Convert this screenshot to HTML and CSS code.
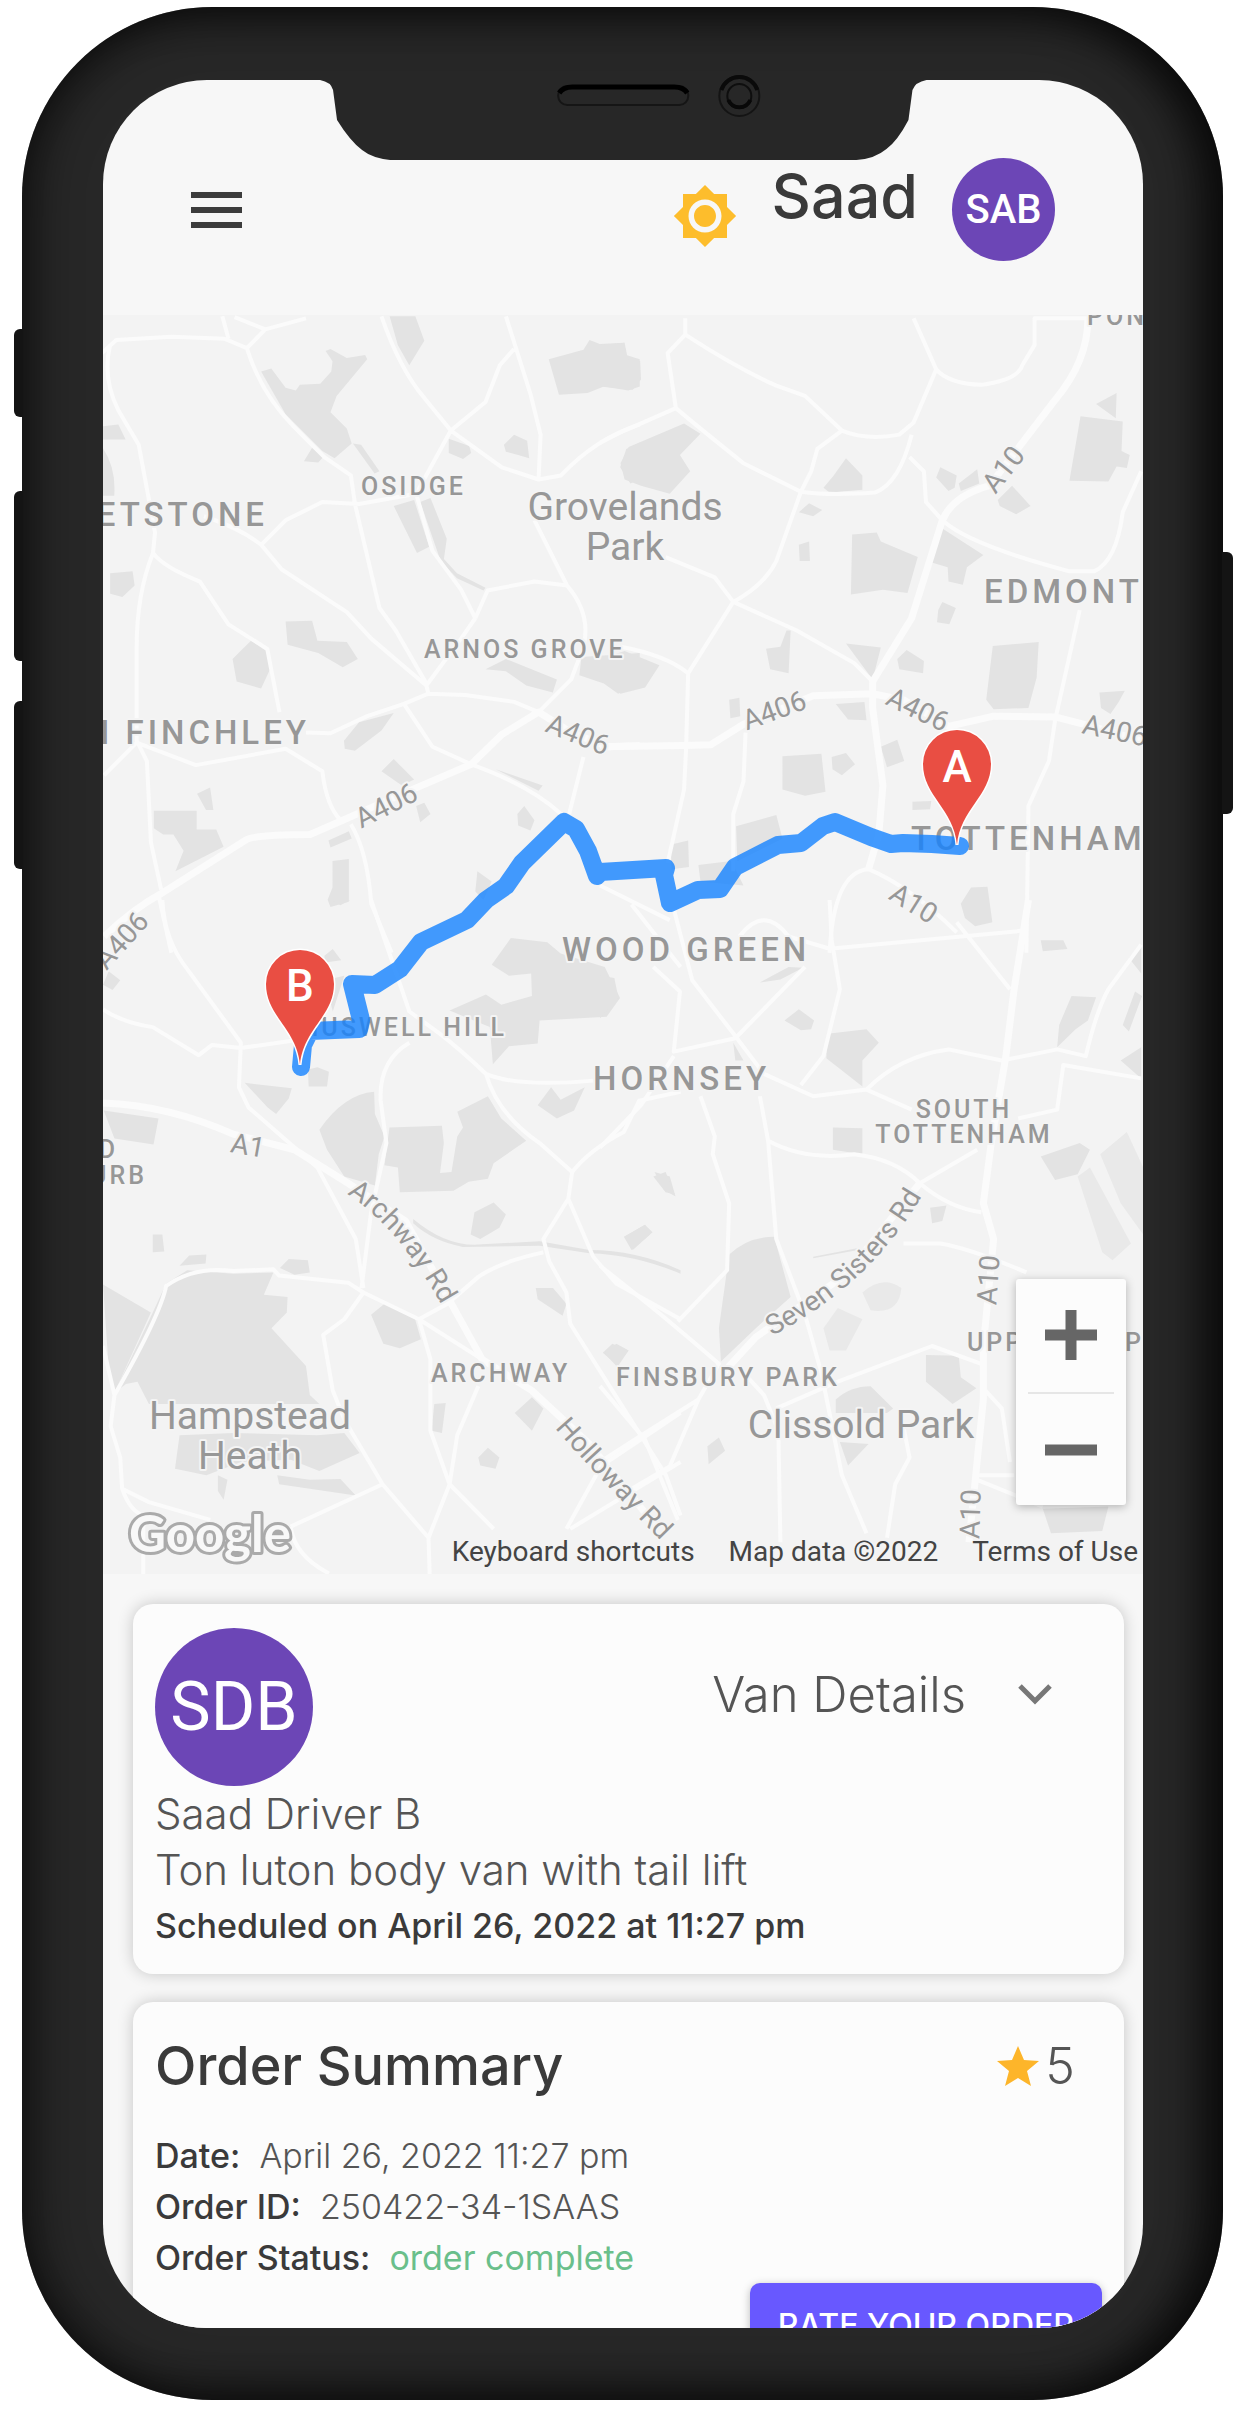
FILE: index.html
```html
<!DOCTYPE html>
<html lang="en">
<head>
<meta charset="utf-8">
<meta name="viewport" content="width=device-width, initial-scale=1">
<title>Order tracking</title>
<link rel="stylesheet" href="styles.css">
</head>
<body>
<div class="phone">
  <span class="key key-mute"></span>
  <span class="key key-up"></span>
  <span class="key key-down"></span>
  <span class="key key-power"></span>
  <svg class="notch" viewBox="0 0 600 84" aria-hidden="true">
    <path d="M-2 0H604V1Q593 3 590 11L586 41Q575 62 564 70 552 80 534 81H68Q50 79 40 71 28 62 15 41L11 11Q9 3 -2 1Z" fill="#272727"/>
    <rect x="236" y="7" width="130" height="19" rx="9" fill="#272727" stroke="#151515" stroke-width="2"/>
    <path d="M237 14Q241 8 250 8H352Q361 8 365 14" fill="none" stroke="#000" stroke-width="5"/>
    <circle cx="417" cy="17" r="20" fill="#272727" stroke="#141414" stroke-width="2"/>
    <path d="M399 11A19 19 0 0 1 435 11" fill="none" stroke="#0a0a0a" stroke-width="4"/>
    <circle cx="417" cy="17" r="12" fill="#272727" stroke="#0e0e0e" stroke-width="2"/>
    <path d="M406 21A12 12 0 0 0 428 21" fill="none" stroke="#080808" stroke-width="4"/>
  </svg>
  <div class="screen">
    <header class="topbar">
      <button class="icon-button" aria-label="Menu">
        <svg width="52" height="40" viewBox="0 0 52 40"><path d="M0 5H51M0 20H51M0 35H51" stroke="#3c3c3c" stroke-width="6"/></svg>
      </button>
      <button class="icon-button theme" aria-label="Toggle theme">
        <svg width="66" height="66" viewBox="0 0 24 24" fill="#fdbd2c"><path d="M20 8.69V4h-4.69L12 .69 8.69 4H4v4.69L.69 12 4 15.31V20h4.69L12 23.31 15.31 20H20v-4.69L23.31 12 20 8.69zM12 18c-3.31 0-6-2.69-6-6s2.69-6 6-6 6 2.69 6 6-2.69 6-6 6zm0-10c-2.21 0-4 1.79-4 4s1.79 4 4 4 4-1.79 4-4-1.79-4-4-4z"/></svg>
      </button>
      <span class="user">Saad</span>
      <span class="avatar">SAB</span>
    </header>

    <section class="map" aria-label="Delivery route">
      <svg class="map-canvas" viewBox="103 315 1040 1259">
        <g class="tile" transform="translate(0 300) scale(.408)">
          <path class="park" d="M955 40H1018L1040 100 1003 160 975 110ZM640 175 665 168 700 215 725 222 735 208 785 205 812 175 815 150 798 125 810 120 850 142 895 135 900 145 825 235 810 275 850 315 862 352 820 388 790 370 700 280ZM745 395 765 362 792 385 780 398ZM865 352 885 355 930 420 918 425ZM1345 145 1430 122 1445 98 1470 108 1530 105 1535 135 1568 145V212L1540 222 1480 212 1440 228 1370 232ZM1100 340 1150 358 1155 375 1135 390 1100 375ZM1235 355 1260 330 1292 345 1297 388 1270 380 1240 372ZM1568 350 1535 365 1520 410 1545 450 1568 440ZM965 505 1015 490 1052 605 1022 620ZM1030 495 1055 485 1095 585 1088 635 1120 670 1190 705 1185 712 1120 682 1080 640ZM250 310 290 305 308 342H250ZM250 360Q285 410 280 480H250ZM270 670 325 665 330 700 300 728 270 720ZM700 788 765 786 778 835 850 838 877 880 840 900 780 865 705 845ZM570 880 615 835 660 865 662 905 640 952 580 935ZM1190 905 1240 880 1365 930 1355 962 1290 945 1240 910ZM1425 875 1568 865V935L1515 965 1480 940 1420 920ZM843 1080 880 1035 965 1012 935 1055 870 1105 845 1100ZM935 1155 965 1125 1015 1175 985 1190ZM483 1210 515 1195 523 1250 505 1250ZM377 1252H482V1298H530L548 1340 430 1400 450 1350 425 1310H400L377 1295ZM805 1325 855 1302 862 1320 810 1342ZM815 1375 855 1370 855 1475 810 1488 803 1470 815 1440ZM1020 1240 1040 1232 1055 1260 1030 1280ZM1268 1260 1285 1240 1310 1275 1300 1300 1270 1288ZM1215 1150 1330 1190 1320 1203ZM1170 1400 1205 1425 1185 1470 1165 1450Z"/>
          <path class="road" d="M250 130 285 98 420 90 550 95 605 118 650 72 750 45M575 42 650 72M545 40 560 95M605 118Q640 230 720 310L795 385 860 430 870 500 930 755 970 810 1045 940M270 110Q250 190 290 270L340 355 380 570 375 620Q335 720 335 850L335 1080 360 1130 370 1330 395 1445M375 620Q400 655 490 690L560 795 655 855 685 1010M640 600 690 660 850 765 910 830 1045 945M500 530Q590 560 640 600L700 540 790 495 880 500 1020 475 1105 320 1190 250 1225 160 1260 120M935 40Q980 170 1040 240L1105 320 1230 410 1320 440 1325 330 1300 230 1240 40M1320 440 1375 430Q1460 340 1568 305M1020 475 1060 615 1130 710 1165 780M1165 780 1195 712 1310 690 1390 700M1310 540 1390 700Q1450 770 1430 850L1400 930 1320 1010M1165 780 1130 830 1045 945 1050 965M750 1060 810 1062 900 1020 990 990 1050 965 1140 968 1260 985 1320 1010M255 1165 335 1085 480 1140 700 1100 790 1155Q800 1240 835 1275M990 990 1060 1095 1155 1138Q1300 1190 1375 1260M1430 1120 1395 1260"/>
          <path class="road" d="M860 1285Q900 1350 910 1480L960 1600M390 1465 420 1600" />
          <path class="road wide" d="M255 1560Q330 1490 395 1455L600 1325Q620 1310 760 1310L840 1275 1010 1200 1155 1138 1230 1065 1320 1010 1400 1060 1490 1095 1568 1092"/>
        </g>
        <g class="tile" transform="translate(600 300) scale(.41 .408)">
          <path class="park" d="M0 110 60 105 68 145 98 150 100 195 80 220 0 212ZM50 400 70 360 205 303 245 328 195 380 220 420 170 475 100 455 60 440ZM545 460 570 430 600 388 640 430V465L560 472ZM485 520 510 498 542 515 520 530ZM485 600 510 592 512 640 487 640ZM615 575 675 570 685 592 775 630 750 718 690 710 612 722ZM835 560 935 625 895 655 885 698 850 690 848 655 805 642ZM825 760 835 740 868 755 852 795 822 790ZM820 435 830 410 870 430 865 460 850 468ZM875 450 920 415 925 450 880 468ZM970 490 1005 455 1050 505 1015 525 975 505ZM1172 285 1275 298 1272 370 1292 380 1285 412 1260 408 1240 445 1145 443ZM1210 255 1260 228 1258 290ZM958 848 1070 838 1065 925 1045 1000 960 1003 942 980ZM600 842 685 852 665 930ZM725 880 748 858 790 885 788 915 730 905ZM405 855 440 850 455 810 465 810 460 915 415 905ZM0 880 60 860 145 895 110 950 50 965 0 930ZM315 980 340 975 342 1020 318 1025ZM575 990 645 985 650 1030 605 1028ZM1218 962 1280 958 1265 985 1245 1015 1222 1000ZM685 1095 725 1078 742 1130 700 1145ZM445 1118 540 1112 550 1205 500 1215 445 1200ZM565 1120 600 1110 622 1138 590 1165 567 1150ZM762 1230 808 1228 805 1248 762 1250ZM332 1290 430 1262 445 1320 335 1375ZM172 1335 215 1325 217 1390 175 1395ZM240 1385 320 1375 350 1435 245 1425ZM880 1480 905 1440 945 1438 957 1525 915 1535 890 1515Z"/>
          <path class="road" d="M208 45V85L165 130 185 265 60 320 0 350M208 85Q330 165 430 210L500 235 590 320Q650 345 730 330L765 300 820 170 765 45M820 170Q850 205 930 208 1020 195 1030 160L1060 110V45H1190M185 265Q250 320 350 400L490 470Q560 480 670 472 730 450 760 330M590 320 530 365 515 420 490 470 430 640Q400 700 325 740L280 680 160 630M325 740 215 915 210 1100 205 1200 165 1380M50 850Q160 870 215 915M325 740 480 810 620 890 665 935M755 385 790 420 795 495 835 540Q900 600 1145 665H1205Q1260 640 1275 520L1320 420M1170 760 1110 1030 1095 1130 1045 1240 1040 1600M355 1060 350 1180 325 1260 325 1400M655 1395Q570 1400 560 1600M655 1395Q760 1440 870 1550M0 1435 170 1520M340 1560Q400 1480 460 1560L560 1590 1040 1545"/>
          <path class="road wide" d="M1190 45Q1190 150 1110 245L950 455Q860 480 835 540L760 780 665 935 665 1000 690 1190 680 1310 655 1395M0 1095 205 1092 270 1090 350 1040 520 970 665 965 740 980 850 1045 960 1020 1110 1022 1200 1045 1320 1080"/>
        </g>
        <g class="tile" transform="translate(80 900) scale(.383 .446)">
          <path class="park" d="M1075 145 1125 85 1220 95 1255 120 1370 150 1410 220 1375 262 1200 270 1195 322 1120 328 1078 368 1070 285 965 248 1060 212 1100 235 1180 215 1178 165 1120 170ZM655 0H705L680 12ZM638 125 660 110 682 135 640 140ZM60 190 75 160 105 180 85 202ZM640 180 690 170 660 250ZM595 380 620 375 650 385 645 418H597ZM430 410 553 422 545 445 512 480 490 465ZM625 515Q690 435 768 430L770 480 795 530 780 570 770 640 690 620 645 560ZM808 510 945 506 950 545 940 612 970 610 985 530 1000 510 985 475 1065 440 1100 490 1165 540 1080 590 1065 625 1015 632 975 652 835 655 830 600 795 595ZM1195 460 1230 420 1255 448 1318 420 1290 472 1245 490ZM62 472 205 490 192 548 90 535ZM1020 750 1030 700 1080 678 1112 705 1095 735 1045 760ZM1500 610 1540 620 1555 665 1525 650ZM1420 755 1475 728 1495 745 1440 785ZM190 750H215L220 788 190 790ZM260 820 285 797 330 795 328 815ZM522 825 545 805 595 808 600 835 560 840ZM870 715Q960 780 1050 772L1200 765 1330 785Q1450 785 1568 830V838Q1450 795 1330 792L1200 775 1000 778Q920 765 870 725ZM60 862 185 925 90 1105 75 1050ZM90 1105 190 925 225 860 280 830 400 838 505 835 480 885 542 890 540 925 500 960 590 1045 600 1110 625 1130H180L150 1080 120 1085ZM260 1200 400 1195 620 1200 690 1195 730 1240 625 1280 550 1255 420 1260 330 1290 248 1275ZM360 1290 385 1300 375 1345 360 1325ZM515 1290 600 1300 680 1298 720 1335 520 1310ZM760 930 795 905 875 940 890 985 835 1005 792 995ZM1190 870 1235 870 1270 905 1260 932 1195 895ZM1365 1015 1390 995 1432 1010 1405 1045ZM925 1130 955 1128 945 1195 918 1190ZM1135 1150 1180 1115 1210 1140 1180 1190ZM1040 1250 1065 1228 1095 1250 1085 1275 1045 1268Z"/>
          <path class="road" d="M215 0Q220 90 280 155L420 320 415 420 440 465 560 555 620 600 720 760 740 870M60 245Q110 275 190 285L310 348 345 325 420 332 580 312M760 0 860 250 940 300Q1000 340 1060 390 1140 420 1340 405M860 320Q780 360 785 450L800 545 760 700 735 870M1060 390Q1090 480 1200 545L1285 610 1275 670 1210 760 1225 810 1270 880 1280 950 1390 1100 1530 1290 1568 1380M1285 610Q1330 560 1420 520L1460 450 1568 430M1275 670 1340 800 1400 860 1568 940M1210 790Q1100 810 1040 845L960 905 885 940 740 880 700 858 520 842 505 828 400 832Q300 820 225 865 210 930 90 1110L60 1000M90 1110 80 1180 105 1250 110 1320 180 1350 340 1390M740 880 690 940 635 975 660 1100 690 1165 790 1310 910 1430 915 1568M885 940 915 1030 915 1190 965 1310 910 1430M885 940 1050 1030M1040 1090 985 1200 965 1310 1080 1410M110 1320Q130 1370 165 1380V1568M550 1405 790 1310M550 1405Q560 1470 650 1510M1568 1150 1360 1270 1270 1410M1568 1260 1280 1410M1568 150 1440 10"/>
          <path class="road wide" d="M60 455Q230 460 400 525L560 560 700 635 850 720 960 890 1050 1030 1180 1100 1330 1220 1500 1400"/>
        </g>
        <g class="tile" transform="translate(600 900) scale(.41 .446)">
          <path class="park" d="M390 185 460 150 495 152 440 178ZM450 270 485 245 522 270 515 290 490 292ZM555 300 650 290 680 320 640 360 640 418 552 355ZM1075 90 1130 90 1140 110 1080 115ZM1115 330 1120 280 1150 215 1210 218 1190 270 1160 290ZM1290 130 1320 100V165ZM1275 280 1305 205 1322 215 1290 295ZM1270 360 1320 330V400ZM325 320 350 360H330ZM0 170 35 175 45 220 0 265ZM568 510 640 512V570L568 560ZM1075 575 1170 545 1195 560 1165 615 1110 628ZM805 690 845 685 835 720 810 725ZM315 795Q360 755 425 755L465 890 380 960 295 1035 290 960ZM520 800 630 780 630 785 520 803ZM795 1020 875 1022 880 1070 918 1095 860 1130 795 1080ZM575 1120Q610 1090 660 1090L715 1140 700 1150H575ZM585 1215 655 1220 605 1268ZM262 1225 290 1205 305 1235 265 1265ZM1080 1365 1240 1360 1225 1415 1100 1420ZM130 620 160 610 182 660 160 655ZM60 755 110 728 122 750 80 785ZM10 1015 40 995 70 1010 40 1045Z"/>
          <path class="water" d="M1220 570 1285 520 1325 600V750L1270 680ZM1165 620 1195 600 1295 770 1250 808 1225 790ZM640 880Q690 840 735 870 730 930 660 920ZM545 960 580 915 640 940 600 1010 560 1010Z"/>
          <path class="road" d="M180 20 225 180 330 305 400 390 520 440 650 425Q730 350 850 335L980 360 1115 335 1185 350Q1210 250 1240 200L1320 100M130 150 195 205 180 340 330 310 500 150M0 555 100 460 180 350M245 440 280 530 275 570 315 680 310 830 190 945M390 440 410 540 430 760 500 930 540 1060 590 1290 650 1420M410 540Q500 585 620 570 720 580 780 635L920 560M780 635Q850 690 930 700M560 0 565 90 585 200 545 350 490 415M870 50 1000 200M650 425 760 470M1020 490 1115 470 1130 370 1320 400M740 770H830Q900 780 1040 835M0 820Q140 920 290 1040L240 1120 110 1195 0 1260M340 1050 400 1110 435 1190 440 1440M240 1120 170 1270 40 1340M430 1140 580 1080 810 1000 930 1040M940 1100 980 1140 1000 1260M740 1180 755 1250 720 1310 700 1430M910 1290H1010M920 1300 1080 1360M0 1090 110 1210 190 1390"/>
          <path class="road wide" d="M1045 0 1010 200 990 350 955 540 935 680 960 760 935 1000 935 1120 900 1440M780 635 600 840 380 980 300 1060"/>
        </g>

        <g class="area big">
          <text x="268" y="526" text-anchor="end">WHETSTONE</text>
          <text x="310" y="744" text-anchor="end">NORTH FINCHLEY</text>
          <text x="984" y="603">EDMONTON</text>
          <text x="911" y="850">TOTTENHAM</text>
          <text x="562" y="961">WOOD GREEN</text>
          <text x="593" y="1090">HORNSEY</text>
        </g>
        <g class="area">
          <text x="1087" y="325">PONDERS END</text>
          <text x="361" y="495">OSIDGE</text>
          <text x="424" y="658">ARNOS GROVE</text>
          <text x="507" y="1036" text-anchor="end">MUSWELL HILL</text>
          <text x="964" y="1118" text-anchor="middle">SOUTH</text>
          <text x="964" y="1143" text-anchor="middle">TOTTENHAM</text>
          <text x="118" y="1158" text-anchor="end">HAMPSTEAD</text>
          <text x="147" y="1184" text-anchor="end">SUBURB</text>
          <text x="431" y="1382">ARCHWAY</text>
          <text x="616" y="1386">FINSBURY PARK</text>
          <text x="967" y="1351">UPPER CLAPTON</text>
        </g>
        <g class="place">
          <text x="625" y="520">Grovelands</text>
          <text x="625" y="560">Park</text>
          <text x="250" y="1429">Hampstead</text>
          <text x="250" y="1469">Heath</text>
          <text x="861" y="1438">Clissold Park</text>
        </g>
        <g class="street">
          <text transform="translate(386 805) rotate(-27)" y="10">A406</text>
          <text transform="translate(578 734) rotate(22)" y="10">A406</text>
          <text transform="translate(774 710) rotate(-20)" y="10">A406</text>
          <text transform="translate(918 709) rotate(26)" y="10">A406</text>
          <text transform="translate(1115 730) rotate(12)" y="10">A406</text>
          <text transform="translate(121 940) rotate(-48)" y="10">A406</text>
          <text transform="translate(1003 469) rotate(-52)" y="10">A10</text>
          <text transform="translate(914 903) rotate(32)" y="10">A10</text>
          <text transform="translate(988 1280) rotate(-86)" y="10">A10</text>
          <text transform="translate(970 1514) rotate(-88)" y="10">A10</text>
          <text transform="translate(248 1145) rotate(10)" y="10">A1</text>
        </g>
        <path id="archway" d="M347 1194Q400 1228 447 1315" fill="none"/>
        <path id="holloway" d="M555 1428Q600 1480 680 1560" fill="none"/>
        <path id="sisters" d="M772 1336Q876 1282 928 1185" fill="none"/>
        <g class="street along">
          <text><textPath href="#archway">Archway Rd</textPath></text>
          <text><textPath href="#holloway">Holloway Rd</textPath></text>
          <text><textPath href="#sisters">Seven Sisters Rd</textPath></text>
        </g>

        <path class="route" d="M960 846 932 844 903 843 891 844 871 837 835 822 823 826 801 843 778 845 735 867 720 889 698 890 670 903 664 875 666 868 600 872 597 876 588 851 576 829 564 822 522 863 506 886 486 900 467 920 421 942 400 969 375 985 352 984 361 1020 359 1029 310 1031 303 1045 301 1067"/>
        <g class="pin" transform="translate(957 764)">
          <path d="M0 81C-3 45-34 32-34 0A34 34 0 0 1 34 0C34 32 3 45 0 81Z"/>
          <text y="18">A</text>
        </g>
        <g class="pin" transform="translate(300 984)">
          <path d="M0 81C-3 45-34 32-34 0A34 34 0 0 1 34 0C34 32 3 45 0 81Z"/>
          <text y="17">B</text>
        </g>
        <text class="brand" x="129" y="1552">Google</text>
      </svg>
      <div class="zoom">
        <button aria-label="Zoom in"><svg width="52" height="52" viewBox="0 0 52 52"><path d="M0 25H52M26 0V50" stroke="#666" stroke-width="11"/></svg></button>
        <button aria-label="Zoom out"><svg width="52" height="52" viewBox="0 0 52 52"><path d="M0 26H52" stroke="#666" stroke-width="11"/></svg></button>
      </div>
      <div class="legal">
        <button>Keyboard shortcuts</button>
        <span>Map data ©2022</span>
        <a href="#terms">Terms of Use</a>
      </div>
    </section>

    <main class="cards">
      <section class="card driver">
        <div class="driver-head">
          <span class="avatar large">SDB</span>
          <button class="details">Van Details
            <svg width="34" height="22" viewBox="0 0 34 22"><path d="M2 3 17 18 32 3" fill="none" stroke="#777" stroke-width="5"/></svg>
          </button>
        </div>
        <p class="line">Saad Driver B</p>
        <p class="line">Ton luton body van with tail lift</p>
        <p class="line when">Scheduled on April 26, 2022 at 11:27 pm</p>
      </section>
      <section class="card order">
        <div class="order-head">
          <h2>Order Summary</h2>
          <span class="rating"><svg width="42" height="40" viewBox="0 0 42 40"><path d="M21 0 27 14 42 15 30 25 34 40 21 32 8 40 12 25 0 15 15 14Z" fill="#fdb52a"/></svg>5</span>
        </div>
        <dl class="facts">
          <div><dt>Date:</dt><dd>April 26, 2022 11:27 pm</dd></div>
          <div><dt>Order ID:</dt><dd>250422-34-1SAAS</dd></div>
          <div><dt>Order Status:</dt><dd class="done">order complete</dd></div>
        </dl>
        <button class="rate">RATE YOUR ORDER</button>
      </section>
    </main>
  </div>
</div>
</body>
</html>
```
FILE: styles.css
```css
* { box-sizing: border-box; }

body {
  margin: 0;
  padding: 7px 20px 12px 22px;
  background: #fff;
  color: #3a3a3a;
  font-family: Inter, "Open Sans", sans-serif;
}

button {
  border: 0;
  padding: 0;
  background: none;
  color: inherit;
  font: inherit;
  cursor: pointer;
}

h2, p, dl, dd { margin: 0; }
svg { display: block; }

/* Device frame */
.phone {
  position: relative;
  padding: 73px 80px 72px 81px;
  border-radius: 190px;
  background: #272727;
  box-shadow: inset 0 0 50px 4px #000b, inset -24px 0 40px #0007;
}

.screen {
  aspect-ratio: 1040 / 2248;
  overflow: hidden;
  border-radius: 104px;
  background: #f7f7f7;
}

.notch {
  position: absolute;
  top: 72px;
  left: 25%;
  width: 50%;
  overflow: visible;
}

.key {
  position: absolute;
  left: -8px;
  width: 9px;
  border-radius: 6px 0 0 6px;
  background: #141414;
}
.key-mute { top: 322px; height: 88px; }
.key-up { top: 484px; height: 170px; }
.key-down { top: 694px; height: 168px; }
.key-power {
  top: 545px;
  left: auto;
  right: -10px;
  width: 11px;
  height: 262px;
  border-radius: 0 6px 6px 0;
}

/* Header */
.topbar {
  display: flex;
  align-items: center;
  padding: 78px 88px 54px;
}
.theme {
  margin-left: auto;
  padding-top: 12px;
}
.user {
  align-self: flex-start;
  margin: 0 34px;
  font-size: 61px;
  font-weight: 500;
  line-height: 76px;
}
.avatar {
  display: flex;
  align-items: center;
  justify-content: center;
  width: 103px;
  height: 103px;
  border-radius: 50%;
  background: #6c46b6;
  color: #fff;
  font-family: Roboto, sans-serif;
  font-size: 40px;
  font-weight: 500;
}
.avatar.large {
  width: 158px;
  height: 158px;
  font-size: 68px;
  font-weight: 400;
}

/* Map */
.map { position: relative; }
.map-canvas {
  width: 100%;
  background: #f3f3f3;
  font-family: Roboto, sans-serif;
}
.park { fill: #e3e3e3; }
.water { fill: #e9e9e9; }
.road {
  fill: none;
  stroke: #fbfbfb;
  stroke-width: 4;
  stroke-linejoin: round;
  vector-effect: non-scaling-stroke;
}
.road.wide { stroke-width: 7; }
.map-canvas text {
  fill: #979797;
  stroke: #f4f4f4;
  stroke-width: 4;
  stroke-linejoin: round;
  paint-order: stroke;
}
.area {
  font-size: 25px;
  font-weight: 500;
  letter-spacing: 3px;
}
.area.big {
  font-size: 33px;
  letter-spacing: 4px;
}
.place {
  font-size: 39px;
  text-anchor: middle;
}
.street {
  font-size: 28px;
  text-anchor: middle;
}
.street.along { text-anchor: start; }
.route {
  fill: none;
  stroke: #1482ff;
  stroke-opacity: .8;
  stroke-width: 18;
  stroke-linecap: round;
  stroke-linejoin: round;
}
.pin path {
  fill: #e94e43;
  stroke: #fff;
  stroke-width: 3;
  paint-order: stroke;
}
.map-canvas .pin text {
  fill: #fff;
  stroke: none;
  font-size: 44px;
  font-weight: 500;
  text-anchor: middle;
}
.map-canvas .brand {
  fill: #f8f8f8;
  stroke: #aaa;
  stroke-width: 6;
  font-family: Lato, sans-serif;
  font-size: 51px;
  font-weight: 700;
}
.zoom {
  position: absolute;
  right: 17px;
  bottom: 69px;
  width: 110px;
  padding: 0 12px;
  border-radius: 3px;
  background: #fcfcfc;
  box-shadow: 0 2px 10px #0004;
}
.zoom button {
  display: grid;
  place-items: center;
  width: 100%;
  height: 113px;
}
.zoom button + button { border-top: 2px solid #e6e6e6; }
.legal {
  position: absolute;
  right: 0;
  bottom: 0;
  display: flex;
  gap: 34px;
  padding: 4px 5px 6px;
  color: #444;
  font-family: Roboto, sans-serif;
  font-size: 28px;
  line-height: 32px;
}
.legal a {
  color: inherit;
  text-decoration: none;
}

/* Cards */
.cards {
  display: grid;
  gap: 28px;
  padding: 30px 19px 0 30px;
}
.card {
  padding: 24px 22px;
  border-radius: 20px;
  background: #fcfcfc;
  box-shadow: 0 0 16px #0003;
}
.driver { padding-bottom: 20px; }
.driver-head {
  display: flex;
  justify-content: space-between;
}
.details {
  display: flex;
  align-items: center;
  gap: 52px;
  height: 132px;
  padding-right: 50px;
  color: #555;
  font-size: 49px;
  font-weight: 300;
}
.line {
  color: #555;
  font-size: 42px;
  font-weight: 300;
  line-height: 56px;
}
.when {
  color: #3a3a3a;
  font-size: 34px;
  font-weight: 500;
}
.order-head {
  display: flex;
  align-items: center;
  justify-content: space-between;
  padding: 0 27px 24px 0;
}
.order-head h2 {
  font-size: 54px;
  font-weight: 500;
  line-height: 80px;
}
.rating {
  display: flex;
  align-items: center;
  gap: 6px;
  color: #555;
  font-size: 50px;
  font-weight: 300;
}
.facts {
  font-size: 34px;
  line-height: 51px;
}
.facts div {
  display: flex;
  gap: 19px;
}
.facts dt { font-weight: 500; }
.facts dd {
  color: #555;
  font-weight: 300;
}
.facts .done {
  color: #6abf8b;
  font-weight: 400;
}
.rate {
  display: block;
  height: 84px;
  margin: 0 0 0 auto;
  padding: 0 28px;
  border-radius: 10px;
  background: #6858ff;
  box-shadow: 0 2px 8px #0004;
  color: #fff;
  font-size: 32px;
  font-weight: 500;
}
```
